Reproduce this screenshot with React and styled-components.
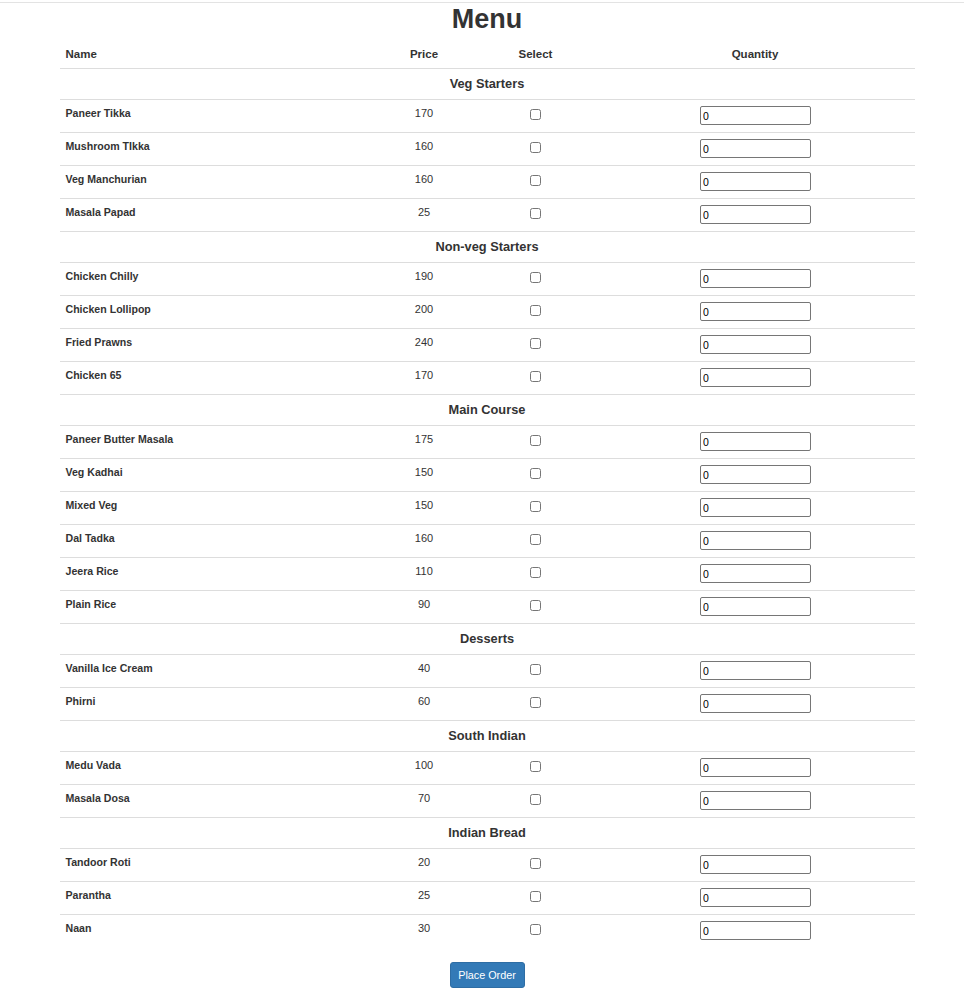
import React from "react";
import styled, { createGlobalStyle } from "styled-components";

const GlobalStyle = createGlobalStyle`
  body {
    margin: 0;
    background: #fff;
    color: #333;
    font-family: "Liberation Sans", Arial, Helvetica, sans-serif;
  }
`;

const TopRule = styled.hr`
  margin: 2px 10px 0 0;
  border: 0;
  border-top: 1px solid #e3e3e3;
`;

const Title = styled.h1`
  margin: 0;
  font-size: 27px;
  line-height: 32px;
  font-weight: bold;
  text-align: center;
`;

const Table = styled.table`
  width: 855px;
  margin: 0 auto;
  border-collapse: collapse;
  font-size: 10.6px;
  line-height: 15px;
`;

const HeadCell = styled.th`
  height: 27px;
  padding: 0 6px 6px;
  vertical-align: bottom;
  font-size: 11.5px;
  font-weight: bold;
  text-align: ${(p) => (p.$left ? "left" : "center")};
  width: ${(p) => p.$width}px;
  border-bottom: 1px solid #ddd;
`;

const CategoryCell = styled.td`
  padding: 7px 6px 8px;
  text-align: center;
  font-size: 12.8px;
  font-weight: bold;
  border-top: 1px solid #ddd;
`;

const Cell = styled.td`
  padding: 6px 6px 7px;
  vertical-align: top;
  border-top: 1px solid #ddd;
  text-align: ${(p) => (p.$left ? "left" : "center")};
  font-weight: ${(p) => (p.$bold ? "bold" : "normal")};
  font-size: ${(p) => (p.$bold ? "10.6px" : "11px")};
`;

const Check = styled.input`
  width: 11px;
  height: 11px;
  margin: 3px 0 0;
`;

const Qty = styled.input`
  box-sizing: border-box;
  width: 111px;
  height: 19px;
  margin: 0 0 0 1px;
  padding: 1px 2px;
  border: 1px solid #767676;
  border-radius: 2px;
  font-family: "Liberation Sans", Arial, sans-serif;
  font-size: 10.5px;
  color: #000;
`;

const Footer = styled.div`
  display: flex;
  justify-content: center;
  padding-top: 15px;
`;

const Button = styled.button`
  width: 75px;
  height: 26px;
  padding: 0;
  background: #337ab7;
  border: 1px solid #2e6da4;
  border-radius: 3px;
  color: #fff;
  font-family: "Liberation Sans", Arial, sans-serif;
  font-size: 10.8px;
`;

const menu = [
  {
    title: "Veg Starters",
    items: [
      ["Paneer Tikka", 170],
      ["Mushroom TIkka", 160],
      ["Veg Manchurian", 160],
      ["Masala Papad", 25],
    ],
  },
  {
    title: "Non-veg Starters",
    items: [
      ["Chicken Chilly", 190],
      ["Chicken Lollipop", 200],
      ["Fried Prawns", 240],
      ["Chicken 65", 170],
    ],
  },
  {
    title: "Main Course",
    items: [
      ["Paneer Butter Masala", 175],
      ["Veg Kadhai", 150],
      ["Mixed Veg", 150],
      ["Dal Tadka", 160],
      ["Jeera Rice", 110],
      ["Plain Rice", 90],
    ],
  },
  {
    title: "Desserts",
    items: [
      ["Vanilla Ice Cream", 40],
      ["Phirni", 60],
    ],
  },
  {
    title: "South Indian",
    items: [
      ["Medu Vada", 100],
      ["Masala Dosa", 70],
    ],
  },
  {
    title: "Indian Bread",
    items: [
      ["Tandoor Roti", 20],
      ["Parantha", 25],
      ["Naan", 30],
    ],
  },
];

const App = () => {
  return (
    <>
      <GlobalStyle />
      <TopRule />
      <Title>Menu</Title>
      <Table>
        <thead>
          <tr>
            <HeadCell $left $width={301}>Name</HeadCell>
            <HeadCell $width={91}>Price</HeadCell>
            <HeadCell $width={108}>Select</HeadCell>
            <HeadCell $width={307}>Quantity</HeadCell>
          </tr>
        </thead>
        <tbody>
          {menu.map((group) => (
            <React.Fragment key={group.title}>
              <tr>
                <CategoryCell colSpan={4}>{group.title}</CategoryCell>
              </tr>
              {group.items.map(([name, price]) => (
                <tr key={name}>
                  <Cell $left $bold>{name}</Cell>
                  <Cell>{price}</Cell>
                  <Cell>
                    <Check type="checkbox" />
                  </Cell>
                  <Cell>
                    <Qty type="text" defaultValue="0" />
                  </Cell>
                </tr>
              ))}
            </React.Fragment>
          ))}
        </tbody>
      </Table>
      <Footer>
        <Button>Place Order</Button>
      </Footer>
    </>
  );
};

export default App;
